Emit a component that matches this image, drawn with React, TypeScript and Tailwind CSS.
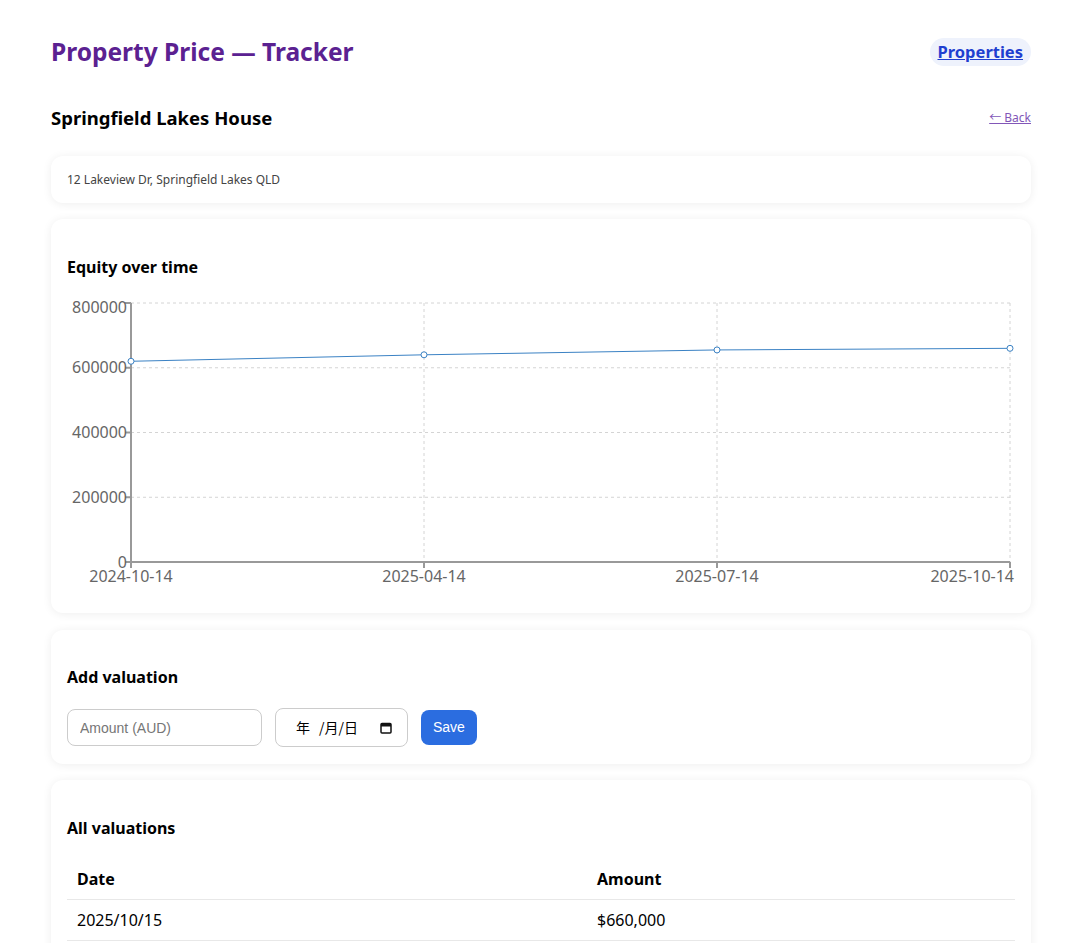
const font = { fontFamily: '"Noto Sans", "Noto Sans CJK SC", sans-serif' }

const data = [
  { date: '2024-10-14', value: 620000 },
  { date: '2025-04-14', value: 640000 },
  { date: '2025-07-14', value: 655000 },
  { date: '2025-10-14', value: 660000 },
]

function EquityChart() {
  const left = 64
  const right = 943
  const top = 13
  const bottom = 272
  const max = 800000
  const xs = data.map((_, i) => left + ((right - left) * i) / (data.length - 1))
  const y = (v: number) => bottom - ((bottom - top) * v) / max
  const ticks = [0, 200000, 400000, 600000, 800000]
  const pts = data.map((d, i) => `${xs[i]},${y(d.value)}`).join(' ')

  return (
    <svg width="948" height="300" className="block" style={{ fontFamily: '"Noto Sans", sans-serif' }}>
      {ticks.map((t) => (
        <line key={t} x1={left} x2={right} y1={y(t)} y2={y(t)} stroke="#d4d4d4" strokeDasharray="3 3" />
      ))}
      {xs.map((x) => (
        <line key={x} x1={x} x2={x} y1={top} y2={bottom} stroke="#d4d4d4" strokeDasharray="3 3" />
      ))}
      <line x1={left} x2={left} y1={top} y2={bottom} stroke="#999" strokeWidth="2" />
      <line x1={left} x2={right} y1={bottom} y2={bottom} stroke="#999" strokeWidth="2" />
      {ticks.map((t) => (
        <g key={t}>
          <line x1={left - 6} x2={left} y1={y(t)} y2={y(t)} stroke="#999" strokeWidth="2" />
          <text x={left - 4} y={y(t) + (t === max ? 10 : 5.5)} textAnchor="end" fontSize="16" fill="#666">
            {t}
          </text>
        </g>
      ))}
      {xs.map((x, i) => (
        <g key={x}>
          <line x1={x} x2={x} y1={bottom} y2={bottom + 6} stroke="#999" strokeWidth="2" />
          <text
            x={i === xs.length - 1 ? 947 : x}
            y={bottom + 20}
            textAnchor={i === xs.length - 1 ? 'end' : 'middle'}
            fontSize="16"
            fill="#666"
          >
            {data[i].date}
          </text>
        </g>
      ))}
      <polyline points={pts} fill="none" stroke="#3b82c4" strokeWidth="1" />
      {data.map((d, i) => (
        <circle key={d.date} cx={xs[i]} cy={y(d.value)} r="3" fill="#fff" stroke="#3b82c4" strokeWidth="1" />
      ))}
    </svg>
  )
}

function Card({ children, className = '' }: { children: React.ReactNode; className?: string }) {
  return (
    <div className={`rounded-xl bg-white px-4 shadow-[0_1px_10px_rgba(0,0,0,0.07)] ${className}`}>{children}</div>
  )
}

export default function App() {
  return (
    <div className="min-h-screen bg-white text-black" style={font}>
      <div className="mx-[51px] w-[980px] pt-[35px] pb-10">
        <header className="flex h-[34px] items-center justify-between">
          <h1 className="text-[24.5px] font-bold leading-[34px] text-[#5b2191]">Property Price — Tracker</h1>
          <a href="#" className="rounded-full bg-[#eef2fc] px-2 py-[2px] text-[16.5px] font-bold text-[#1f3fd0] underline">
            Properties
          </a>
        </header>

        <div className="mt-[35px] flex items-center justify-between">
          <h2 className="text-[18.5px] font-bold leading-[28px]">Springfield Lakes House</h2>
          <a href="#" className="text-[12px] text-[#8257b8] underline">← Back</a>
        </div>

        <Card className="mt-[24px] flex h-[47px] items-center">
          <p className="text-[12px] text-[#444]">12 Lakeview Dr, Springfield Lakes QLD</p>
        </Card>

        <Card className="mt-4 pt-[37px] pb-[23px]">
          <h3 className="text-[16px] font-bold leading-[22px]">Equity over time</h3>
          <div className="mt-3">
            <EquityChart />
          </div>
        </Card>

        <Card className="mt-[17px] pt-[36px] pb-[17px]">
          <h3 className="text-[16px] font-bold leading-[22px]">Add valuation</h3>
          <div className="mt-5 flex items-center gap-[13px]" style={{ fontFamily: '"Liberation Sans", Arial, sans-serif' }}>
            <input
              placeholder="Amount (AUD)"
              className="h-[37px] w-[195px] rounded-lg border border-[#ccc] px-3 text-[14px] outline-none placeholder:text-[#767676]"
            />
            <div className="flex h-[39px] w-[133px] items-center rounded-lg border border-[#ccc] pl-[20px] pr-[15px] text-[14px]">
              <span style={{ fontFamily: '"Noto Sans CJK SC", sans-serif' }}>年</span>
              <span className="ml-[9px]" style={{ fontFamily: '"Noto Sans CJK SC", sans-serif' }}>/月/日</span>
              <svg width="12" height="12" viewBox="0 0 12 12" className="ml-auto">
                <rect x="1" y="1.5" width="10" height="9.5" rx="1" fill="none" stroke="#111" strokeWidth="1.5" />
                <rect x="1" y="1.5" width="10" height="3" fill="#111" />
              </svg>
            </div>
            <button className="h-[35px] rounded-lg bg-[#2b6de0] px-3 text-[14px] text-white">Save</button>
          </div>
        </Card>

        <Card className="mt-4 pt-[37px] pb-4">
          <h3 className="text-[16px] font-bold leading-[22px]">All valuations</h3>
          <table className="mt-5 w-full border-collapse text-left text-[16px]">
            <thead>
              <tr className="border-b border-[#e8e8e8]">
                <th className="w-[520px] px-[10px] py-[8px] font-bold">Date</th>
                <th className="px-[10px] py-[8px] font-bold">Amount</th>
              </tr>
            </thead>
            <tbody>
              <tr className="border-b border-[#e8e8e8]">
                <td className="px-[10px] py-[8px]">2025/10/15</td>
                <td className="px-[10px] py-[8px]">$660,000</td>
              </tr>
              <tr className="border-b border-[#e8e8e8]">
                <td className="px-[10px] py-[8px]">2025/07/14</td>
                <td className="px-[10px] py-[8px]">$655,000</td>
              </tr>
            </tbody>
          </table>
        </Card>
      </div>
    </div>
  )
}
